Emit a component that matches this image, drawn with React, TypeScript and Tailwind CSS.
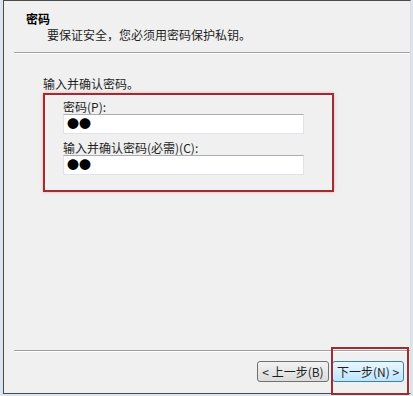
const font = { fontFamily: '"Noto Sans CJK SC", "Liberation Sans", sans-serif' };

function PasswordField({ label }: { label: string }) {
  return (
    <div className="flex flex-col">
      <span className="text-[12px] leading-[15px] text-[#1e1e1e]">{label}</span>
      <div className="w-[241px] h-[20px] bg-white border border-[#e2e3ea] border-t-[#abadb3] flex items-center pl-[3px]">
        <span className="text-[12px] leading-none text-black">●●</span>
      </div>
    </div>
  );
}

export default function App() {
  return (
    <div
      className="relative w-[413px] h-[396px] bg-[#dbe5f0] pl-[3px] overflow-hidden"
      style={font}
    >
      <div className="w-[408px] h-[394px] bg-[#f0f0f0] border-l border-t border-b border-r border-[#4a4a4a] border-r-[#dcdcdc] flex flex-col">
        {/* header */}
        <div className="pt-[10px] pl-[22px]">
          <div className="text-[12px] leading-4 font-bold text-black">密码</div>
          <div className="pl-[21px] text-[12px] leading-4 text-[#1e1e1e]">
            要保证安全，您必须用密码保护私钥。
          </div>
        </div>
        <div className="mt-[9px] ml-[10px] h-px bg-[#a0a0a0] border-b border-white box-content" />

        {/* body */}
        <div className="pl-[39px] pt-[22px]">
          <div className="text-[12px] leading-4 text-[#1e1e1e]">输入并确认密码。</div>
          <div className="mt-[1px] w-[291px] h-[99px] border-2 border-[#9b2d35] shadow-[0_0_3px_#f0a8a8] pt-[4px] pl-[18px]">
            <PasswordField label="密码(P):" />
            <div className="mt-[6px]">
              <PasswordField label="输入并确认密码(必需)(C):" />
            </div>
          </div>
        </div>

        {/* footer */}
        <div className="mt-auto">
          <div className="ml-[10px] h-px bg-[#a0a0a0] border-b border-white box-content" />
          <div className="mt-[9px] pb-[11px] pr-[6px] flex justify-end gap-[3px]">
            <button className="w-[72px] h-[21px] rounded-[3px] border border-[#707070] bg-gradient-to-b from-[#f2f2f2] to-[#dcdcdc] text-[12px] leading-none text-[#1e1e1e]">
              &lt; 上一步(B)
            </button>
            <button className="w-[72px] h-[21px] rounded-[3px] border border-[#3c7fb1] bg-gradient-to-b from-[#eaf6fd] to-[#bee6fd] text-[12px] leading-none text-[#1e1e1e]">
              下一步(N) &gt;
            </button>
          </div>
        </div>
      </div>

      {/* annotation around next button */}
      <div className="absolute left-[331px] top-[347px] w-[78px] h-[48px] border-2 border-[#9b2d35] pointer-events-none" />
    </div>
  );
}
